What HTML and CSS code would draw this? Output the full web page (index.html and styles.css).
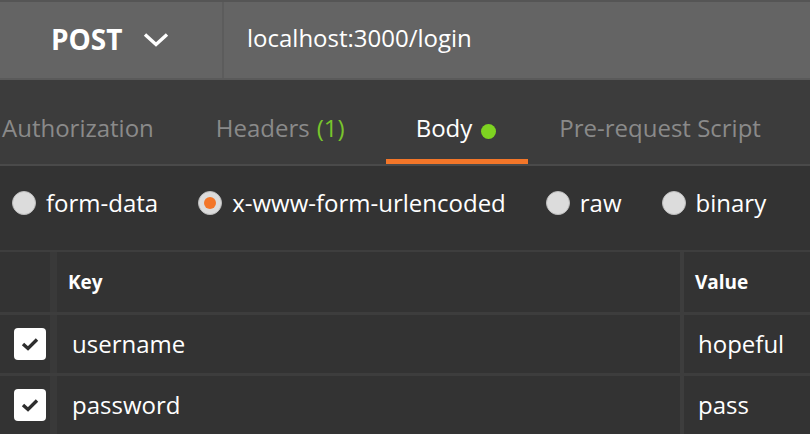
FILE: index.html
```html
<!DOCTYPE html>
<html>
<head>
<meta charset="utf-8">
<link rel="stylesheet" href="styles.css">
</head>
<body>
<div class="topbar">
  <div class="method">
    <span class="method-label">POST</span>
    <svg class="chev" width="26" height="16" viewBox="0 0 26 16"><path d="M2 2.5 L13 12.5 L24 2.5" fill="none" stroke="#fff" stroke-width="3.4"/></svg>
  </div>
  <div class="url">localhost:3000/login</div>
</div>
<div class="tabs">
  <div class="tab">Authorization</div>
  <div class="tab">Headers <span class="count">(1)</span></div>
  <div class="tab active">Body <span class="dot"></span></div>
  <div class="tab">Pre-request Script</div>
</div>
<div class="bodytypes">
  <label class="radio"><span class="circle"></span>form-data</label>
  <label class="radio"><span class="circle on"></span>x-www-form-urlencoded</label>
  <label class="radio"><span class="circle"></span>raw</label>
  <label class="radio"><span class="circle"></span>binary</label>
</div>
<div class="table">
  <div class="row head">
    <div class="cell chk"></div>
    <div class="cell key">Key</div>
    <div class="cell val">Value</div>
  </div>
  <div class="row">
    <div class="cell chk"><span class="box"><svg width="20" height="16" viewBox="0 0 20 16"><path d="M3 8 L8 12.5 L17 3.5" fill="none" stroke="#2e2e2e" stroke-width="3.4"/></svg></span></div>
    <div class="cell key">username</div>
    <div class="cell val">hopeful</div>
  </div>
  <div class="row">
    <div class="cell chk"><span class="box"><svg width="20" height="16" viewBox="0 0 20 16"><path d="M3 8 L8 12.5 L17 3.5" fill="none" stroke="#2e2e2e" stroke-width="3.4"/></svg></span></div>
    <div class="cell key">password</div>
    <div class="cell val">pass</div>
  </div>
</div>
</body>
</html>
```
FILE: styles.css
```css
html, body {
  margin: 0;
  padding: 0;
  background: #333333;
  font-family: "Open Sans", "Noto Sans", sans-serif;
  color: #ffffff;
  overflow: hidden;
}
.topbar {
  display: flex;
  height: 76px;
  background: #646464;
  border-top: 2px solid #555555;
  border-bottom: 2px solid #5a5a5a;
}
.method {
  width: 224px;
  display: flex;
  align-items: center;
  justify-content: flex-start;
  gap: 20px;
  border-right: 2px solid #5c5c5c;
  padding-left: 51px;
  box-sizing: border-box;
}
.method-label {
  font-weight: 700;
  font-size: 28px;
  padding-bottom: 3px;
}
.url {
  flex: 1;
  display: flex;
  align-items: center;
  padding-left: 23px;
  font-size: 24px;
  padding-bottom: 6px;
}
.tabs {
  display: flex;
  align-items: flex-end;
  height: 84px;
  background: #3c3c3c;
  border-bottom: 2px solid #4a4a4a;
  margin-left: -28px;
  gap: 2px;
}
.tab {
  padding: 0 30px;
  height: 53px;
  font-size: 24px;
  color: #8a8a8a;
  border-bottom: 5px solid transparent;
  white-space: nowrap;
  box-sizing: border-box;
  display: flex;
  align-items: flex-start;
}
.tab.active {
  color: #ffffff;
  border-bottom-color: #f37629;
  margin-left: 9px;
  padding-right: 32px;
}
.tab.active + .tab { margin-left: -1px; }
.count { color: #79c52c; margin-left: 7px; }
.dot {
  display: inline-block;
  width: 15px;
  height: 15px;
  border-radius: 50%;
  background: #7ed321;
  margin-left: 9px;
  margin-top: 13px;
}
.bodytypes {
  display: flex;
  align-items: center;
  height: 84px;
  padding-left: 12px;
  gap: 40px;
  border-bottom: 2px solid #3e3e3e;
}
.radio {
  display: flex;
  align-items: center;
  gap: 10px;
  font-size: 24px;
  padding-bottom: 12px;
}
.circle {
  width: 22px;
  height: 22px;
  border-radius: 50%;
  background: #dcdcdc;
  border: 1px solid #bdbdbd;
  box-sizing: content-box;
  position: relative;
  margin-top: 2px;
}
.circle.on::after {
  content: "";
  position: absolute;
  left: 5px;
  top: 5px;
  width: 12px;
  height: 12px;
  border-radius: 50%;
  background: #f37629;
}
.table { display: flex; flex-direction: column; }
.row {
  display: flex;
  height: 58px;
  border-bottom: 3px solid #3d3d3d;
}
.row.head { height: 60px; }
.cell {
  display: flex;
  align-items: center;
  box-sizing: border-box;
}
.chk {
  width: 50px;
  border-right: 7px solid #393939;
  box-sizing: content-box;
  justify-content: flex-start;
}
.key {
  flex: 1;
  padding-left: 15px;
  font-size: 24px;
  border-right: 4px solid #3d3d3d;
  padding-bottom: 2px;
}
.val {
  width: 126px;
  padding-left: 14px;
  font-size: 24px;
  padding-bottom: 2px;
}
.head .key, .head .val {
  font-weight: 700;
  font-size: 19px;
  padding-left: 11px;
  padding-bottom: 0;
}
.head .val { padding-left: 11px; }
.box {
  margin-left: 14px;
  width: 32px;
  height: 32px;
  border-radius: 4px;
  background: #ffffff;
  display: flex;
  align-items: center;
  justify-content: center;
}
```
